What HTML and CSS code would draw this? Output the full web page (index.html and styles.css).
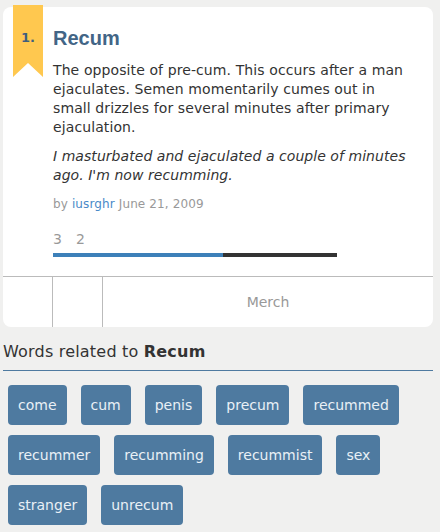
FILE: index.html
```html
<!DOCTYPE html>
<html>
<head>
<meta charset="utf-8">
<link rel="stylesheet" href="styles.css">
</head>
<body>
<div class="page">
  <div class="card">
    <div class="ribbon"><span>1.</span></div>
    <div class="content">
      <h1 class="word">Recum</h1>
      <p class="meaning">The opposite of pre-cum. This occurs after a man ejaculates. Semen momentarily cumes out in small drizzles for several minutes after primary ejaculation.</p>
      <p class="example">I masturbated and ejaculated a couple of minutes ago. I'm now recumming.</p>
      <div class="contributor">by <a class="author">iusrghr</a> June 21, 2009</div>
      <div class="votes">
        <span>3</span><span>2</span>
      </div>
      <div class="bar"><div class="up" style="width:60%"></div></div>
    </div>
    <div class="footer">
      <div class="cell narrow"></div>
      <div class="cell narrow"></div>
      <div class="cell wide">Merch</div>
    </div>
  </div>
  <h2 class="related-title">Words related to <b>Recum</b></h2>
  <div class="tags">
    <a class="tag">come</a>
    <a class="tag">cum</a>
    <a class="tag">penis</a>
    <a class="tag">precum</a>
    <a class="tag">recummed</a>
    <a class="tag">recummer</a>
    <a class="tag">recumming</a>
    <a class="tag">recummist</a>
    <a class="tag">sex</a>
    <a class="tag">stranger</a>
    <a class="tag">unrecum</a>
  </div>
</div>
</body>
</html>
```
FILE: styles.css
```css
html, body {
  margin: 0;
  padding: 0;
  background: #f0f0ef;
}
body {
  font-family: "DejaVu Sans", Verdana, sans-serif;
  color: #333;
}
.page {
  width: 430px;
  padding: 7px 0 0 3px;
}
.card {
  position: relative;
  background: #fff;
  border-radius: 8px;
}
.ribbon {
  position: absolute;
  left: 10px;
  top: -2px;
  width: 30px;
  height: 72px;
  background: #ffc84f;
  clip-path: polygon(0 0, 100% 0, 100% 100%, 50% 80.5%, 0 100%);
  display: flex;
  justify-content: center;
  padding-top: 25px;
  box-sizing: border-box;
}
.ribbon span {
  font-family: "DejaVu Sans", Verdana, sans-serif;
  font-weight: bold;
  font-size: 13px;
  color: #3e5f7e;
  line-height: 16px;
}
.content {
  padding: 18px 24px 19px 50px;
}
.word {
  margin: 0;
  font-family: "Liberation Sans", Arial, sans-serif;
  font-weight: bold;
  font-size: 20px;
  line-height: 26px;
  color: #426586;
}
.meaning {
  margin: 10px 0 0;
  font-size: 14px;
  line-height: 19px;
  letter-spacing: 0.1px;
}
.example {
  margin: 10px 0 0;
  font-size: 14px;
  line-height: 19px;
  font-style: italic;
  letter-spacing: 0.05px;
}
.contributor {
  margin-top: 11px;
  font-size: 12px;
  line-height: 16px;
  color: #999;
  letter-spacing: 0.12px;
}
.author {
  color: #4a89c8;
}
.votes {
  margin-top: 18px;
  display: flex;
  gap: 14px;
  font-size: 14px;
  line-height: 18px;
  color: #999;
}
.bar {
  margin-top: 5px;
  width: 284px;
  height: 4px;
  background: #333;
  display: flex;
}
.bar .up {
  background: #3d80b9;
  height: 100%;
}
.footer {
  display: flex;
  border-top: 1px solid #bbb;
  height: 50px;
}
.cell {
  box-sizing: border-box;
}
.narrow {
  width: 50px;
  border-right: 1px solid #bbb;
}
.wide {
  flex: 1;
  display: flex;
  align-items: center;
  justify-content: center;
  font-size: 14px;
  color: #999;
}
.related-title {
  margin: 14px 0 0;
  font-size: 16px;
  font-weight: normal;
  line-height: 22px;
  padding-bottom: 7px;
  border-bottom: 1px solid #4e7aa0;
  letter-spacing: 0.2px;
}
.related-title b {
  font-weight: bold;
}
.tags {
  display: flex;
  flex-wrap: wrap;
  gap: 10px 14px;
  padding: 14px 0 0 5px;
}
.tag {
  display: flex;
  align-items: center;
  height: 40px;
  padding: 0 10px;
  background: #4e7aa0;
  color: #e9f0f6;
  border-radius: 4px;
  font-size: 14px;
}
```
